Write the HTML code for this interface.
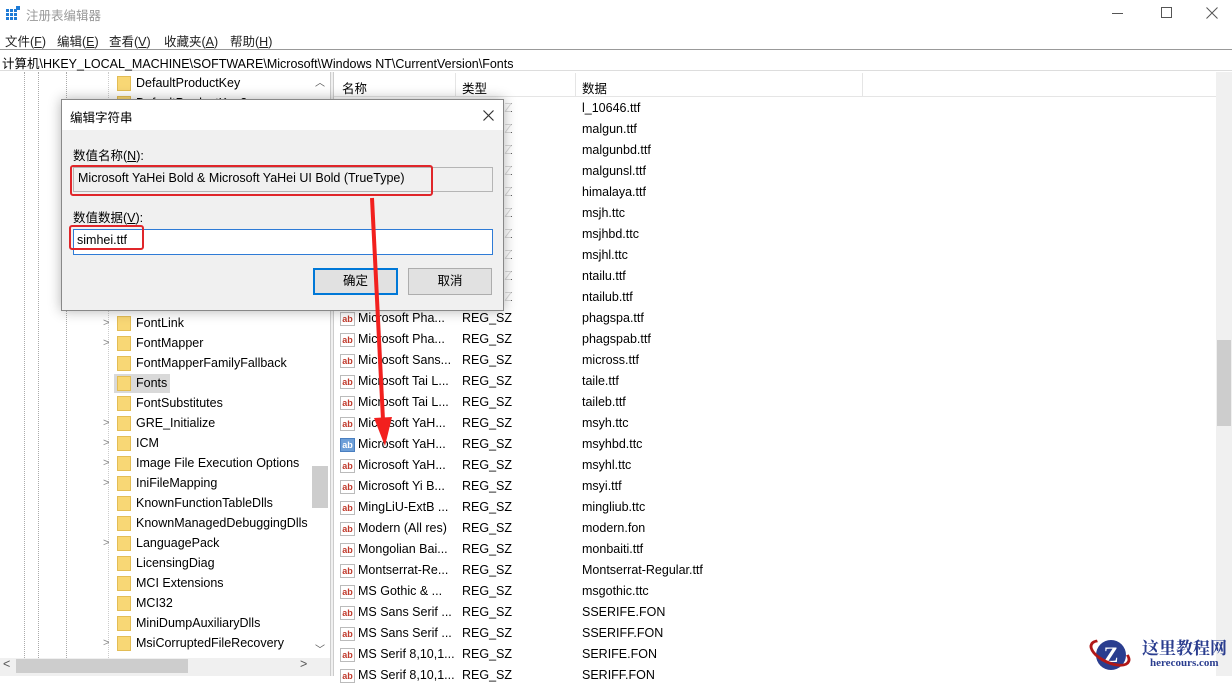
<!DOCTYPE html>
<html><head><meta charset="utf-8"><style>
*{margin:0;padding:0;box-sizing:border-box}
body{width:1232px;height:676px;overflow:hidden;background:#fff;font-family:"Liberation Sans","Noto Sans CJK SC",sans-serif;font-size:12.5px;color:#000;position:relative}
.a{position:absolute;white-space:nowrap}
.ti{position:absolute;left:0;height:20px;line-height:20px}
.fo{position:absolute;left:117px;top:3px;width:14px;height:15px;background:#f8d775;border:1px solid #e3bd55}
.ch{position:absolute;left:103px;top:0;color:#888;font-size:11px}
.tx{position:absolute;left:136px;top:0}
.row{position:absolute;left:334px;height:21px;line-height:21px;width:880px}
.ab{position:absolute;left:6px;top:4px;width:15px;height:14px;border:1px solid #bbb;background:#fff;color:#c0392b;font-size:9px;line-height:12px;text-align:center;font-weight:bold}
.n{position:absolute;left:24px}.t{position:absolute;left:128px}.d{position:absolute;left:248px}
.m{position:absolute;top:31px;color:#222}
</style></head><body>
<!-- title -->
<div class="a" style="left:6px;top:6px;width:14px;height:14px">
<div style="position:absolute;left:0;top:2px;width:12px;height:12px;background:repeating-linear-gradient(90deg,#1e7bd6 0 3px,#fff 3px 4px)"></div>
<div style="position:absolute;left:0;top:2px;width:12px;height:12px;background:repeating-linear-gradient(0deg,transparent 0 3px,#fff 3px 4px)"></div>
<div style="position:absolute;left:10px;top:0;width:4px;height:4px;background:#1e7bd6"></div></div>
<div class="a" style="left:26px;top:5px;color:#999;font-size:12.5px">注册表编辑器</div>
<div class="a" style="left:1112px;top:13px;width:11px;height:1px;background:#555"></div>
<div class="a" style="left:1161px;top:7px;width:11px;height:11px;border:1px solid #555"></div>
<svg class="a" style="left:1206px;top:7px" width="12" height="12"><path d="M0.5 0.5L11.5 11.5M11.5 0.5L0.5 11.5" stroke="#555" stroke-width="1"/></svg>
<div class="m" style="left:5px">文件(<u>F</u>)</div>
<div class="m" style="left:57px">编辑(<u>E</u>)</div>
<div class="m" style="left:109px">查看(<u>V</u>)</div>
<div class="m" style="left:164px">收藏夹(<u>A</u>)</div>
<div class="m" style="left:230px">帮助(<u>H</u>)</div>
<div class="a" style="left:0;top:49px;width:1232px;height:22px;border-top:1px solid #999;border-bottom:1px solid #ddd"></div>
<div class="a" style="left:2px;top:53px">计算机\HKEY_LOCAL_MACHINE\SOFTWARE\Microsoft\Windows NT\CurrentVersion\Fonts</div>
<!-- tree -->
<div class="a" style="left:0;top:72px;width:330px;height:604px;overflow:hidden">
<div class="a" style="left:24px;top:0;width:1px;height:590px;border-left:1px dotted #aaa"></div>
<div class="a" style="left:38px;top:0;width:1px;height:590px;border-left:1px dotted #aaa"></div>
<div class="a" style="left:66px;top:0;width:1px;height:590px;border-left:1px dotted #aaa"></div>
<div class="a" style="left:108px;top:0;width:1px;height:590px;border-left:1px dotted #ccc"></div>
</div>
<div class="ti" style="top:73px;width:310px"><div class="fo"></div><div class="tx">DefaultProductKey</div></div>
<div class="ti" style="top:93px;width:310px"><div class="fo"></div><div class="tx">DefaultProductKey2</div></div>
<div class="ti" style="top:313px;width:310px"><div class="ch">&gt;</div><div class="fo"></div><div class="tx">FontLink</div></div>
<div class="ti" style="top:333px;width:310px"><div class="ch">&gt;</div><div class="fo"></div><div class="tx">FontMapper</div></div>
<div class="ti" style="top:353px;width:310px"><div class="fo"></div><div class="tx">FontMapperFamilyFallback</div></div>
<div class="a" style="left:114px;top:374px;width:56px;height:19px;background:#d9d9d9"></div>
<div class="ti" style="top:373px;width:310px"><div class="fo"></div><div class="tx">Fonts</div></div>
<div class="ti" style="top:393px;width:310px"><div class="fo"></div><div class="tx">FontSubstitutes</div></div>
<div class="ti" style="top:413px;width:310px"><div class="ch">&gt;</div><div class="fo"></div><div class="tx">GRE_Initialize</div></div>
<div class="ti" style="top:433px;width:310px"><div class="ch">&gt;</div><div class="fo"></div><div class="tx">ICM</div></div>
<div class="ti" style="top:453px;width:310px"><div class="ch">&gt;</div><div class="fo"></div><div class="tx">Image File Execution Options</div></div>
<div class="ti" style="top:473px;width:310px"><div class="ch">&gt;</div><div class="fo"></div><div class="tx">IniFileMapping</div></div>
<div class="ti" style="top:493px;width:310px"><div class="fo"></div><div class="tx">KnownFunctionTableDlls</div></div>
<div class="ti" style="top:513px;width:311px;overflow:hidden"><div class="fo"></div><div class="tx">KnownManagedDebuggingDlls</div></div>
<div class="ti" style="top:533px;width:310px"><div class="ch">&gt;</div><div class="fo"></div><div class="tx">LanguagePack</div></div>
<div class="ti" style="top:553px;width:310px"><div class="fo"></div><div class="tx">LicensingDiag</div></div>
<div class="ti" style="top:573px;width:310px"><div class="fo"></div><div class="tx">MCI Extensions</div></div>
<div class="ti" style="top:593px;width:310px"><div class="fo"></div><div class="tx">MCI32</div></div>
<div class="ti" style="top:613px;width:310px"><div class="fo"></div><div class="tx">MiniDumpAuxiliaryDlls</div></div>
<div class="ti" style="top:633px;width:310px"><div class="ch">&gt;</div><div class="fo"></div><div class="tx">MsiCorruptedFileRecovery</div></div>
<!-- tree scrollbars -->
<div class="a" style="left:312px;top:72px;width:17px;height:585px;background:#fff"></div>
<div class="a" style="left:315px;top:74px;color:#555;font-size:10px">︿</div>
<div class="a" style="left:312px;top:466px;width:16px;height:42px;background:#cdcdcd"></div>
<div class="a" style="left:315px;top:641px;color:#555;font-size:10px">﹀</div>
<div class="a" style="left:0;top:658px;width:330px;height:18px;background:#f0f0f0"></div>
<div class="a" style="left:16px;top:659px;width:172px;height:14px;background:#cdcdcd"></div>
<div class="a" style="left:3px;top:657px;color:#555">&lt;</div>
<div class="a" style="left:300px;top:657px;color:#555">&gt;</div>
<div class="a" style="left:330px;top:72px;width:4px;height:604px;background:#f0f0f0;border-left:1px solid #ccc;border-right:1px solid #ccc"></div>
<!-- list header -->
<div class="a" style="left:334px;top:73px;width:882px;height:24px;border-bottom:1px solid #e5e5e5"></div>
<div class="a" style="left:455px;top:73px;width:1px;height:24px;background:#e5e5e5"></div>
<div class="a" style="left:575px;top:73px;width:1px;height:24px;background:#e5e5e5"></div>
<div class="a" style="left:862px;top:73px;width:1px;height:24px;background:#e5e5e5"></div>
<div class="a" style="left:342px;top:78px">名称</div>
<div class="a" style="left:462px;top:78px">类型</div>
<div class="a" style="left:582px;top:78px">数据</div>
<div id="rows"></div>
<script>
var d=[["Microsoft Hi...","l_10646.ttf"],["Malgun Goth...","malgun.ttf"],["Malgun Goth...","malgunbd.ttf"],["Malgun Goth...","malgunsl.ttf"],["Microsoft Hi...","himalaya.ttf"],["Microsoft Jh...","msjh.ttc"],["Microsoft Jh...","msjhbd.ttc"],["Microsoft Jh...","msjhl.ttc"],["Microsoft Ne...","ntailu.ttf"],["Microsoft Ne...","ntailub.ttf"],["Microsoft Pha...","phagspa.ttf"],["Microsoft Pha...","phagspab.ttf"],["Microsoft Sans...","micross.ttf"],["Microsoft Tai L...","taile.ttf"],["Microsoft Tai L...","taileb.ttf"],["Microsoft YaH...","msyh.ttc"],["Microsoft YaH...","msyhbd.ttc"],["Microsoft YaH...","msyhl.ttc"],["Microsoft Yi B...","msyi.ttf"],["MingLiU-ExtB ...","mingliub.ttc"],["Modern (All res)","modern.fon"],["Mongolian Bai...","monbaiti.ttf"],["Montserrat-Re...","Montserrat-Regular.ttf"],["MS Gothic & ...","msgothic.ttc"],["MS Sans Serif ...","SSERIFE.FON"],["MS Sans Serif ...","SSERIFF.FON"],["MS Serif 8,10,1...","SERIFE.FON"],["MS Serif 8,10,1...","SERIFF.FON"]];
var h="";d.forEach(function(r,i){var sel=i==16;h+='<div class="row" style="top:'+(98+i*21)+'px"><div class="ab" style="'+(sel?'background:#6d9fd8;color:#fff;border-color:#4a7fc0':'')+'">ab</div><div class="n">'+r[0]+'</div><div class="t">REG_SZ</div><div class="d">'+r[1]+'</div></div>'});
document.getElementById("rows").innerHTML=h;
</script>
<!-- right scrollbar -->
<div class="a" style="left:1216px;top:72px;width:16px;height:604px;background:#f0f0f0"></div>
<div class="a" style="left:1217px;top:340px;width:14px;height:86px;background:#cdcdcd"></div>
<!-- dialog -->
<div class="a" style="left:61px;top:99px;width:450px;height:212px;background:#fff;opacity:.85"></div>
<div class="a" style="left:61px;top:99px;width:443px;height:212px;background:#f0f0f0;border:1px solid #888;box-shadow:0 0 12px rgba(0,0,0,.3)"></div>
<div class="a" style="left:62px;top:100px;width:441px;height:30px;background:#fff"></div>
<div class="a" style="left:70px;top:107px">编辑字符串</div>
<svg class="a" style="left:483px;top:110px" width="11" height="11"><path d="M0.5 0.5L10.5 10.5M10.5 0.5L0.5 10.5" stroke="#333" stroke-width="1.2"/></svg>
<div class="a" style="left:73px;top:145px">数值名称(<u>N</u>):</div>
<div class="a" style="left:73px;top:167px;width:420px;height:25px;background:#f0f0f0;border:1px solid #b5b5b5"></div>
<div class="a" style="left:78px;top:171px">Microsoft YaHei Bold &amp; Microsoft YaHei UI Bold (TrueType)</div>
<div class="a" style="left:70px;top:165px;width:363px;height:31px;border:2px solid #e0262a;border-radius:3px"></div>
<div class="a" style="left:73px;top:207px">数值数据(<u>V</u>):</div>
<div class="a" style="left:73px;top:229px;width:420px;height:26px;background:#fff;border:1px solid #2e7bd6"></div>
<div class="a" style="left:77px;top:233px">simhei.ttf</div>
<div class="a" style="left:69px;top:225px;width:75px;height:25px;border:2px solid #e0262a;border-radius:3px"></div>
<div class="a" style="left:313px;top:268px;width:85px;height:27px;background:#e1e1e1;border:2px solid #0078d7;text-align:center;line-height:23px">确定</div>
<div class="a" style="left:408px;top:268px;width:84px;height:27px;background:#e1e1e1;border:1px solid #adadad;text-align:center;line-height:25px">取消</div>
<!-- arrow -->
<svg class="a" style="left:0;top:0" width="1232" height="676"><line x1="372" y1="198" x2="383" y2="420" stroke="#f2201e" stroke-width="4"/><polygon points="374,418 392,417 385,446" fill="#f2201e"/></svg>
<!-- watermark -->
<div class="a" style="left:1088px;top:636px;width:48px;height:36px">
<div style="position:absolute;left:8px;top:4px;width:30px;height:30px;border-radius:50%;background:#2a3d8f;color:#fff;font:bold 22px 'Liberation Serif',serif;text-align:center;line-height:30px">Z</div>
<div style="position:absolute;left:0;top:6px;width:44px;height:22px;border:3px solid #b01818;border-radius:50%;border-top-color:transparent;transform:rotate(25deg)"></div></div>
<div class="a" style="left:1142px;top:634px;color:#2a3d8f;font:bold 17px 'Noto Serif CJK SC',serif">这里教程网</div>
<div class="a" style="left:1150px;top:657px;color:#2a3d8f;font:bold 11px 'Liberation Serif',serif">herecours.com</div>
</body></html>
